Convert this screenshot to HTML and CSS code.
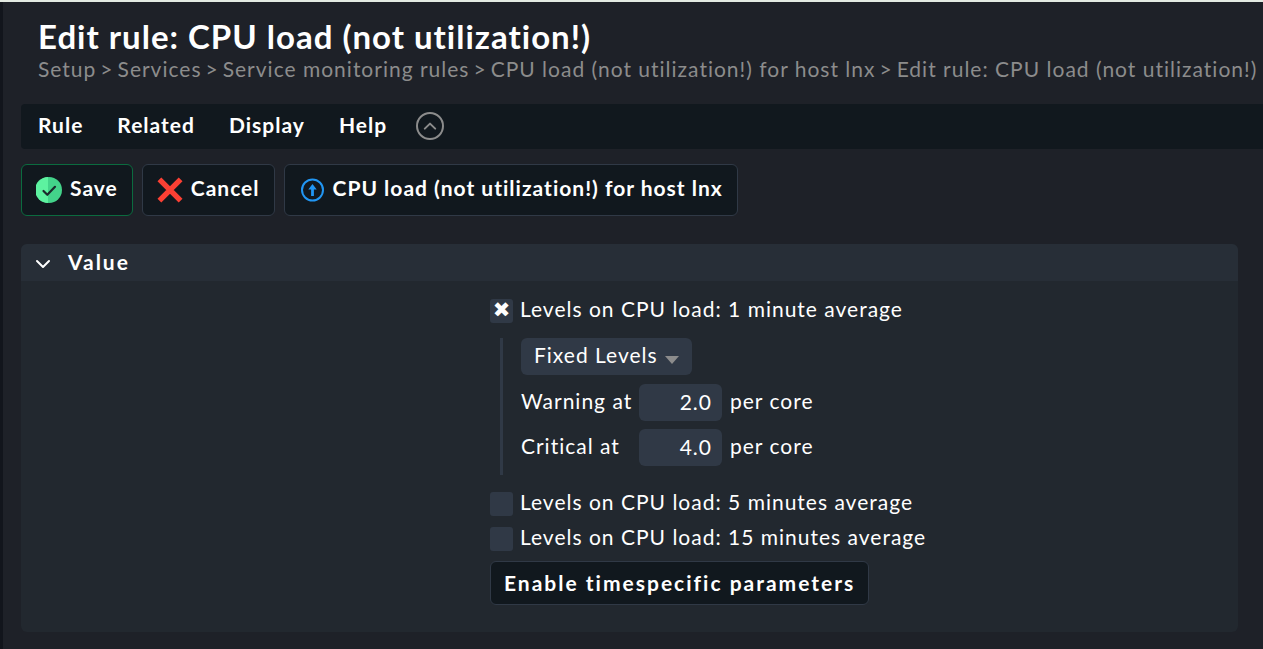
FILE: index.html
```html
<!DOCTYPE html>
<html lang="en">
<head>
<meta charset="utf-8">
<title>Edit rule: CPU load (not utilization!)</title>
<link rel="stylesheet" href="styles.css">
</head>
<body>
<div class="page">
  <header class="page-head">
    <h1 class="title">Edit rule: CPU load (not utilization!)</h1>
    <nav class="breadcrumb" aria-label="Breadcrumb">
      <a href="#">Setup</a><span>&gt;</span><a href="#">Services</a><span>&gt;</span><a href="#">Service monitoring rules</a><span>&gt;</span><a href="#">CPU load (not utilization!) for host lnx</a><span>&gt;</span><a href="#">Edit rule: CPU load (not utilization!)</a>
    </nav>
  </header>

  <nav class="menubar" aria-label="Page menu">
    <button class="menu" type="button">Rule</button>
    <button class="menu" type="button">Related</button>
    <button class="menu" type="button">Display</button>
    <button class="menu" type="button">Help</button>
    <button class="toggle" type="button" aria-label="Hide toolbar">
      <svg viewBox="0 0 28 28" width="28" height="28" fill="none" stroke="#8c8c8c"><circle cx="14" cy="14" r="13" stroke-width="2"/><path d="M8.8 16.6 14 11.6l5.2 5" stroke-width="2" stroke-linecap="round" stroke-linejoin="round"/></svg>
    </button>
  </nav>

  <div class="actions">
    <button class="action save" type="button">
      <svg viewBox="0 0 26 26" width="26" height="26"><circle cx="13" cy="13" r="13" fill="#43d38a"/><path d="M12 0a13 13 0 0 0 0 26z" fill="#5df2a0"/><path d="M7.500 14l3.800 3.800 7.700-8" fill="none" stroke="#1c2a2c" stroke-width="2.200" stroke-linecap="round" stroke-linejoin="round"/></svg>
      <span>Save</span>
    </button>
    <button class="action" type="button">
      <svg viewBox="0 0 26 26" width="26" height="26" fill="none" stroke="#fb4034" stroke-width="5.400" stroke-linecap="butt"><path d="M2.400 2.400l21.200 21.200M23.600 2.400l-21.200 21.200"/></svg>
      <span>Cancel</span>
    </button>
    <button class="action" type="button">
      <svg viewBox="0 0 26 26" width="26" height="26"><circle cx="13.500" cy="13" r="10.500" fill="none" stroke="#2196f3" stroke-width="2"/><path d="M13.500 7l4.200 5.400h-2.800V19h-2.800v-6.600H9.300z" fill="#2196f3"/></svg>
      <span>CPU load (not utilization!) for host lnx</span>
    </button>
  </div>

  <section class="panel">
    <h2 class="panel-head">
      <svg viewBox="0 0 16 16" width="16" height="16" fill="none" stroke="#fff" stroke-width="2" stroke-linecap="round" stroke-linejoin="round"><path d="M2 6l6 6 6-6"/></svg>
      <span>Value</span>
    </h2>
    <form class="panel-body">
      <label class="option"><input class="check" type="checkbox" checked><span>Levels on CPU load: 1 minute average</span></label>
      <div class="levels">
        <div class="select-wrap">
          <select class="select" aria-label="Level type"><option>Fixed Levels</option></select>
          <svg class="arrow" viewBox="0 0 14 8" width="14" height="8"><path d="M0 0h14L7 8z" fill="#8c8c8c"/></svg>
        </div>
        <div class="level-row">
          <label for="warn">Warning at</label>
          <input class="number" id="warn" type="text" value="2.0">
          <span>per core</span>
        </div>
        <div class="level-row">
          <label for="crit">Critical at</label>
          <input class="number" id="crit" type="text" value="4.0">
          <span>per core</span>
        </div>
      </div>
      <label class="option"><input class="check" type="checkbox"><span>Levels on CPU load: 5 minutes average</span></label>
      <label class="option"><input class="check" type="checkbox"><span>Levels on CPU load: 15 minutes average</span></label>
      <button class="enable" type="button">Enable timespecific parameters</button>
    </form>
  </section>
</div>
</body>
</html>
```
FILE: styles.css
```css
* {
  box-sizing: border-box;
}

html {
  min-height: 100%;
  background: #1e2128;
}

body {
  margin: 0;
  min-height: 100vh;
  border-top: 2px solid #e3eae2;
  background: #1e2128;
  color: #fff;
  font-family: Lato, "Noto Sans", sans-serif;
  font-size: 21px;
  line-height: 28px;
  letter-spacing: 1px;
}

button,
input,
select {
  margin: 0;
  font: inherit;
  letter-spacing: inherit;
  color: inherit;
}

svg {
  display: block;
  flex: none;
}

.page {
  min-height: calc(100vh - 2px);
  padding-left: 18px;
  border-left: 3px solid #12151c;
}

.page-head {
  padding: 15px 0 22px 17px;
  white-space: nowrap;
}

.title {
  margin: 0;
  font-size: 33px;
  line-height: 39px;
  font-weight: 700;
}

.breadcrumb {
  display: flex;
  gap: 4px;
  line-height: 26px;
  color: #8c8c8c;
}

.breadcrumb a {
  color: inherit;
  text-decoration: none;
}

.menubar {
  display: flex;
  align-items: center;
  gap: 34px;
  height: 45px;
  padding: 0 0 1px 17px;
  border-radius: 4px 0 0 4px;
  background: #11181e;
}

.menu,
.toggle {
  padding: 0;
  border: 0;
  background: none;
  font-weight: 700;
}

.menu {
  padding-bottom: 2px;
}

.toggle {
  margin-left: -5px;
}

.actions {
  display: flex;
  gap: 9px;
  margin-top: 15px;
}

.action {
  display: flex;
  align-items: center;
  gap: 8px;
  height: 52px;
  padding: 0 14px;
  border: 1px solid #303946;
  border-radius: 6px;
  background: #11181e;
  font-weight: 700;
}

.action span,
.option span,
.level-row label,
.level-row span {
  padding-bottom: 4px;
}

.save {
  border-color: #0b6b3f;
}

.panel {
  margin: 28px 25px 17px 0;
  border-radius: 6px;
  background: #22282f;
  overflow: hidden;
}

.panel-head {
  display: flex;
  align-items: center;
  gap: 17px;
  height: 37px;
  margin: 0;
  padding-left: 14px;
  background: #272e37;
  font-size: 21px;
  font-weight: 700;
  letter-spacing: 2px;
}

.panel-head span {
  padding-bottom: 2px;
}

.panel-body {
  display: flex;
  flex-direction: column;
  align-items: flex-start;
  padding: 12px 0 27px 469px;
}

.option {
  display: flex;
  align-items: center;
  gap: 7px;
  height: 35px;
}

.check {
  display: grid;
  place-items: center;
  appearance: none;
  width: 23px;
  height: 24px;
  border-radius: 3px;
  background: #303946;
}

.check:checked::before {
  content: "✖";
  font-family: "DejaVu Sans", sans-serif;
  font-size: 21px;
  line-height: 23px;
  letter-spacing: 0;
}

.levels {
  display: flex;
  flex-direction: column;
  align-items: flex-start;
  gap: 8px;
  margin: 10px 0 11px 10px;
  padding: 0 0 9px 18px;
  border-left: 3px solid #303946;
}

.select-wrap {
  display: grid;
  align-items: center;
  margin-bottom: 1px;
}

.select {
  grid-area: 1 / 1;
  appearance: none;
  height: 37px;
  padding: 0 34px 4px 13px;
  border: 0;
  border-radius: 6px;
  background: #303946;
}

.arrow {
  grid-area: 1 / 1;
  justify-self: end;
  margin: 6px 13px 0 0;
  pointer-events: none;
}

.level-row {
  display: grid;
  grid-template-columns: 118px 83px auto;
  align-items: center;
}

.level-row span {
  padding-left: 8px;
}

.number {
  width: 100%;
  height: 37px;
  padding: 0 10px 3px;
  border: 0;
  border-radius: 6px;
  background: #303946;
  text-align: right;
}

.enable {
  height: 44px;
  margin-top: 5px;
  padding: 0 13px;
  border: 1px solid #303946;
  border-radius: 6px;
  background: #11181e;
  font-weight: 700;
  letter-spacing: 2px;
}
```
